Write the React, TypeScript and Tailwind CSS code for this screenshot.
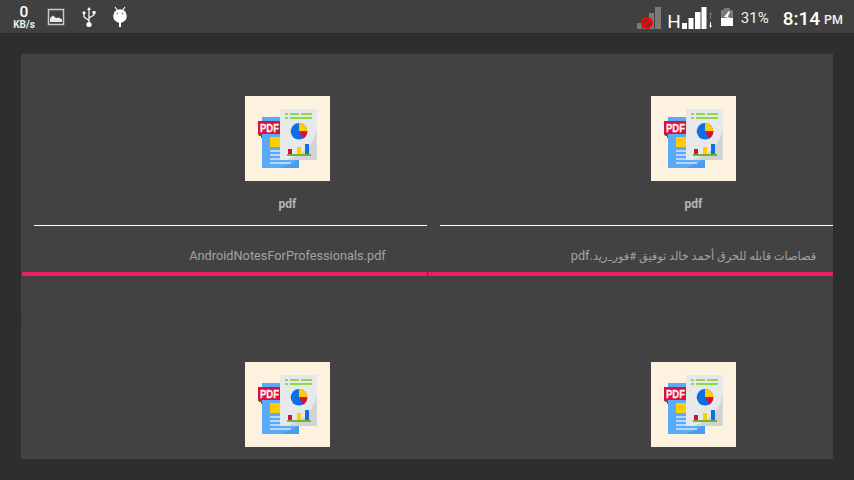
function PdfThumb() {
  return (
    <div className="h-[85px] w-[85px] shrink-0 bg-[#fdf1e0]">
      <svg viewBox="0 0 85 85" width="85" height="85" shapeRendering="crispEdges">
        <rect x="17" y="21" width="36.5" height="51" fill="#5aaafa" />
        <path d="M17 72L35 72L53.5 64V72Z" fill="#4a9cf0" />
        <rect x="13" y="25" width="22" height="13" fill="#dc0f3c" />
        <path d="M13 38H17V41.5H15.5V40H14V39H13Z" fill="#a0410f" />
        <text x="15" y="36" fontFamily="'Liberation Sans', sans-serif" fontWeight="700" fontSize="11.7" fill="#fdeef0" stroke="#fdeef0" strokeWidth="0.3" textLength="19" lengthAdjust="spacingAndGlyphs" shapeRendering="auto">PDF</text>
        <rect x="25" y="41" width="10" height="10" fill="#ffcc00" />
        <g fill="#b5d8fb">
          <rect x="25" y="54" width="11" height="1.6" />
          <rect x="25" y="58" width="11" height="1.6" />
          <rect x="25" y="62" width="11" height="1.6" />
          <rect x="25" y="66" width="21" height="1.6" />
        </g>
        <rect x="35" y="13" width="36.7" height="51" fill="#e7e8e9" />
        <path d="M71.7 30C71 46 60 58 42 64H71.7Z" fill="#d2d3d5" shapeRendering="auto" />
        <g fill="#8cd94a">
          <rect x="40" y="17" width="3" height="2" />
          <rect x="45" y="17" width="9" height="2" />
          <rect x="56" y="17" width="11" height="2" />
          <rect x="40" y="21" width="3" height="2" />
          <rect x="45" y="21" width="22" height="2" />
        </g>
        <g shapeRendering="auto">
          <circle cx="54" cy="35.3" r="8.3" fill="#0d6fe3" />
          <path d="M54 35.3V27A8.3 8.3 0 0 1 62.3 35.3Z" fill="#ffcc00" />
          <path d="M54 35.3H62.3A8.3 8.3 0 0 1 58 42.6Z" fill="#d80f3a" />
        </g>
        <rect x="43" y="53" width="4" height="5" fill="#d80f3a" />
        <rect x="52" y="51" width="4" height="7" fill="#ffcc00" />
        <rect x="60" y="48" width="4" height="10" fill="#0d6fe3" />
        <rect x="42" y="58" width="24" height="2" fill="#6fb52f" />
      </svg>
    </div>
  );
}

function FileCell({ children }: { children: React.ReactNode }) {
  return (
    <div className="flex h-[266px] w-[406px] shrink-0 flex-col pt-[42px]">
      <div className="ml-[224px]">
        <PdfThumb />
      </div>
      <div className="ml-[224px] mt-[14px] flex h-[18px] w-[85px] items-center justify-center text-[12px] font-bold leading-[18px] text-[#b4b4b4]">
        pdf
      </div>
      <div className="ml-[13px] mt-[12px] h-px w-[393px] shrink-0 bg-white" />
      <div className="ml-[224px] mt-[21px] flex h-[18px] w-[85px] items-center justify-center">
        {children}
      </div>
      <div className="ml-px mt-[7px] h-1 w-[405px] shrink-0 bg-[#e91e63]" />
    </div>
  );
}

function LeftIcons() {
  return (
    <div className="flex items-center">
      <div className="ml-[12px] mt-px flex w-[24px] flex-col items-center">
        <span className="text-[15.5px] font-medium leading-[14px] text-white">0</span>
        <span className="mt-px whitespace-nowrap text-[10px] font-bold leading-[9px] text-[#eeeeee]">KB/s</span>
      </div>
      <svg className="ml-[11px]" width="18" height="18" viewBox="0 0 18 18">
        <rect x="1.5" y="1.5" width="15" height="15" fill="none" stroke="#c8c8c8" strokeWidth="1.5" />
        <path d="M3 14V10L6 7.5L9 10L12 9.5L15 11.5V14Z" fill="#e8e8e8" />
      </svg>
      <svg className="ml-[16px]" width="16" height="22" viewBox="0 0 16 22">
        <path d="M8 1L10 4H6ZM7.4 4H8.6V17H7.4Z" fill="#fff" />
        <circle cx="8" cy="18.5" r="2.6" fill="#fff" />
        <path d="M8 14.5L3 11V8" fill="none" stroke="#fff" strokeWidth="1.2" />
        <circle cx="3" cy="6.8" r="1.5" fill="#fff" />
        <path d="M8 12L13 9V7.5" fill="none" stroke="#fff" strokeWidth="1.2" />
        <rect x="11.5" y="5" width="3" height="3" fill="#fff" />
      </svg>
      <svg className="ml-[15px]" width="16" height="22" viewBox="0 0 16 22">
        <path d="M3 1L5.5 4.5M13 1L10.5 4.5" stroke="#fff" strokeWidth="1.2" />
        <circle cx="8" cy="10" r="6.8" fill="#fff" />
        <circle cx="5.5" cy="7.5" r="0.9" fill="#8a8a8a" />
        <circle cx="10.5" cy="7.5" r="0.9" fill="#8a8a8a" />
        <rect x="7" y="16" width="2" height="5" fill="#fff" />
      </svg>
    </div>
  );
}

function RightIcons() {
  return (
    <div className="flex items-start">
      <svg className="mt-[5px]" width="26" height="22" viewBox="0 0 26 22">
        <rect x="1" y="16" width="5" height="6" fill="#7a7a7a" />
        <rect x="7" y="11" width="5" height="11" fill="#7a7a7a" />
        <rect x="13" y="6" width="5" height="16" fill="#7a7a7a" />
        <rect x="19" y="0" width="6" height="22" fill="#7a7a7a" />
        <circle cx="11" cy="16" r="4.8" fill="#404040" stroke="#ff0000" strokeWidth="2.4" />
        <path d="M7.6 19.4L14.4 12.6" stroke="#ff0000" strokeWidth="2.4" />
      </svg>
      <span className="ml-[5.5px] mt-[11px] text-[19px] leading-[18px] text-white">H</span>
      <svg className="ml-[1px] mt-[5px]" width="31" height="22" viewBox="0 0 31 22">
        <rect x="0" y="16" width="5" height="6" fill="#fff" />
        <rect x="6.5" y="11" width="5" height="11" fill="#fff" />
        <rect x="13" y="5" width="5.5" height="17" fill="#fff" />
        <rect x="19.5" y="0" width="5" height="22" fill="#fff" />
        <path d="M28.5 5L27 7.5H28V12H29V7.5H30Z" fill="#777" />
        <path d="M28.5 21L27 18.5H28V15H29V18.5H30Z" fill="#fff" />
      </svg>
      <svg className="ml-[7px] mt-[6px]" width="14" height="18" viewBox="0 0 14 18">
        <rect x="4" y="0" width="6" height="2" fill="#7a7a7a" />
        <rect x="1" y="2" width="12" height="8" fill="#7a7a7a" />
        <rect x="1" y="10" width="12" height="8" fill="#fff" />
        <path d="M9 3L4 9H7L5 14L8 10H10L7.5 9L10 4Z" fill="#fff" />
      </svg>
      <span className="ml-[7px] mt-[6px] text-[15px] leading-[20px] text-[#f0f0f0]">31%</span>
      <span className="ml-[14px] mt-[5px] text-[19px] font-medium leading-[24px] text-white">8:14</span>
      <span className="ml-[4px] mt-[9px] text-[12.5px] font-medium leading-[18px] text-[#f0f0f0]">PM</span>
    </div>
  );
}

export default function App() {
  return (
    <div className="flex h-[480px] w-[854px] flex-col overflow-hidden bg-[#2e2e2e] font-['Roboto','DejaVu_Sans',sans-serif]">
      <header className="flex h-[33px] shrink-0 items-center justify-between bg-[#404040] pr-[11px]">
        <LeftIcons />
        <RightIcons />
      </header>
      <main className="relative ml-[21px] mt-[21px] h-[405px] w-[812px] overflow-hidden bg-[#424242]">
        <div className="flex flex-wrap">
          <FileCell>
            <span className="whitespace-nowrap text-[12.75px] leading-[18px] text-[#a2a2a2]">
              AndroidNotesForProfessionals.pdf
            </span>
          </FileCell>
          <FileCell>
            <span dir="rtl" className="whitespace-nowrap text-[12.7px] leading-[18px] text-[#a2a2a2]">
              <span className="text-[11.3px]">قصاصات قابله للحرق أحمد خالد توفيق #فور_ريد</span>.pdf
            </span>
          </FileCell>
          <div className="w-[406px] pl-[224px] pt-[42px]">
            <PdfThumb />
          </div>
          <div className="w-[406px] pl-[224px] pt-[42px]">
            <PdfThumb />
          </div>
        </div>
        <div className="absolute left-0 top-[265px] h-[2px] w-px bg-[#2e2e2e]" />
      </main>
    </div>
  );
}
